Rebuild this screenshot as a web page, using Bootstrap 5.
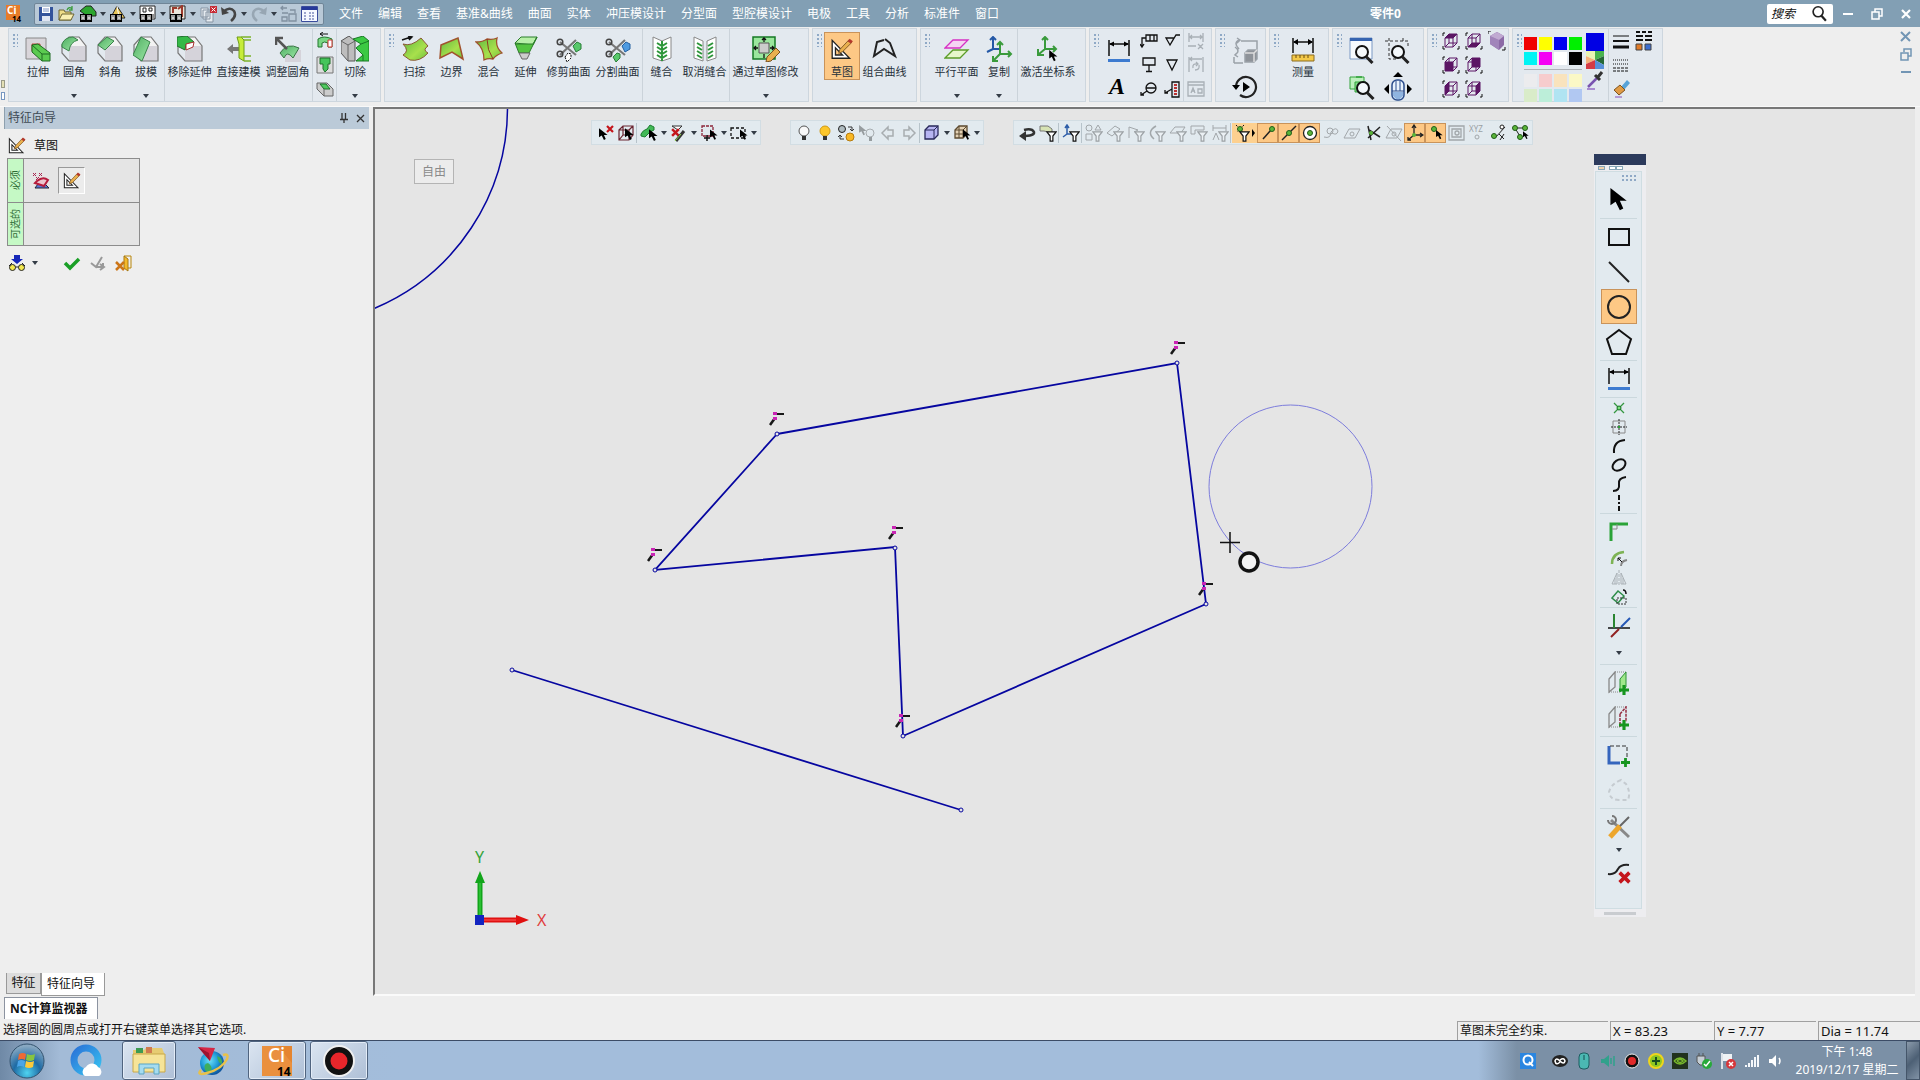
<!DOCTYPE html>
<html lang="zh-CN">
<head>
<meta charset="utf-8">
<meta name="viewport" content="width=device-width, initial-scale=1">
<title>零件0</title>
<link href="https://cdn.jsdelivr.net/npm/bootstrap@5.3.0/dist/css/bootstrap.min.css" rel="stylesheet">
<style>
body{font-family:"Noto Sans","Noto Sans CJK SC",sans-serif;font-size:12px;line-height:16px;background:#eee;color:#111}
button{background:none;border:0;padding:0;color:inherit;display:inline-flex;align-items:center;justify-content:center;flex:none}
svg{display:block;flex:none}
a{color:inherit;text-decoration:none}
.titlebar{background:#829fb4;height:27px;color:#fff}
.qat{background:#b9c9d7;border:1px solid #6f8597;height:22px;border-radius:2px;width:290px;margin-left:12px}
.qat button{width:21px;height:20px}
.car,.qat .car{width:9px}
.car::before,.drop::after{content:"";border:3px solid transparent;border-top:4px solid #343c46;border-bottom:0}
.menus{gap:15px;margin-left:15px}
.doc-name{width:32px;margin-right:365px}
.search-box{background:#fff;border-radius:2px;width:66px;height:20px}
.search-box input{border:0;background:none;width:40px;padding:0 0 0 4px;font-style:italic;font-size:12px;line-height:16px;color:#111}
.search-box input::placeholder{color:#111;opacity:1}
.win-buttons button{width:29px;height:24px}
.ribbon{height:80px;gap:3px;padding:1px 0 5px;border-bottom:1px solid #f8f8f8}
.gutter{width:5px;padding:52px 0 0 1px;gap:4px}
.gutter i{width:4px;height:8px;border:1px solid #9a9a86;background:#e4dfb4}
.gutter i+i{background:#fff;border-color:#7897c0}
.grp{background:#e3e9ef;border:1px solid #cdd6de;height:74px;padding-right:7px}
.grp-tight{padding-right:2px}
.grip{width:6px;height:14px;margin:4px 2px 0 3px;background:radial-gradient(circle,#8fa9c6 1px,transparent 1px) 0 0/4px 4px;flex:none}
.tool{flex-direction:column;justify-content:flex-start;font-size:11px;line-height:14px;padding-top:3px;margin-top:3px;width:36px;min-height:47px;color:#27313b;border:1px solid transparent;white-space:nowrap;align-self:flex-start}
.tool svg{margin-bottom:3px}
.drop::after{margin-top:15px}
.w-a{width:37px}.w-b{width:49px}.w-c{width:60px}.w-d{width:71px}
.on{background:#fdc885!important;border:1px solid #c9935a!important}
.vsep{width:1px;background:#cbd3da;align-self:stretch}
.stack3 button{width:23px;height:24px}
.stack2 button{width:36px;height:36px}
.swatches{display:grid;grid-template-columns:repeat(4,13px);gap:2px}
.swatches button{width:13px;height:13px}
.side{width:373px;padding:0 4px}
.side-head{background:#bbcad8;border-left:1px solid #8ea0ae;height:22px;color:#3f4a55;padding-left:3px}
.side-head button{width:17px}
.slots{width:133px;border:1px solid #8c8c8c;background:#e5e5e5;margin:4px 0 0 3px}
.slots>div{height:43px}
.slots>div+div{border-top:1px solid #8c8c8c;height:43px}
.slot-name{width:16px;background:#c5f9c5;border-left:1px solid #8c8c8c;color:#2d6b35;font-size:10px;line-height:15px;writing-mode:vertical-rl;text-orientation:sideways;transform:rotate(180deg);text-align:center}
.pressed{width:27px;height:27px;border:1px solid #999;border-right-color:#fff;border-bottom-color:#fff;background:#ececec}
.view{background:#e5e5e5;border:2px solid #777;border-right:0;border-bottom:2px solid #fafafa;margin-right:5px;overflow:hidden}
.scene{position:absolute;left:0;top:0;width:100%;height:100%}
.scene text{font:16px "Noto Sans",sans-serif}
.bars{position:absolute;left:216px;top:11px}
.bar{background:#e2eaef;border:1px solid #d2dde3;height:25px;padding:0 2px}
.bar button{width:21px;height:20px}
.bar .car{width:9px}
.bar .wide{width:25px}
.bar .vsep{height:20px;align-self:center;background:#b7c3ca;margin-right:1px}
.bar-next{margin-left:29px}
.dim{opacity:.33}
.mode{position:absolute;left:39px;top:50px;width:40px;height:25px;border:1px solid #b4b4b4;background:#ececec;color:#8a8a8a}
.palette{position:absolute;left:1219px;top:45px;width:52px;background:#ededf0}
.pal-head{height:11px;background:#2c3a5c}
.pal-tabs{height:6px;padding:1px 4px}
.pal-tabs i{width:7px;height:4px;border:1px solid #86a6b8;background:#fff}
.pal-body{background:#e2eaef;border:1px solid #cfdde2;width:47px;margin-left:1px;padding:0 4px}
.pal-body>div{border-bottom:1px solid #cbd8dd;display:flex;flex-direction:column;align-items:center;padding-bottom:1px}
.pal-body>div:last-child{border:0;height:99px}
.pal-body button{width:36px;height:35px}
.pal-body .sm{height:19px}
.pal-body .car{height:20px}
.pal-body .car-low{height:12px}
.pal-foot{width:32px;height:3px;background:#c9ccd0;margin:3px auto 2px 10px}
.tabs{padding-left:2px}
.tabs button{background:#dcdcdc;border:1px solid #999;border-top:0;height:21px;width:35px}
.tabs .cur-tab{background:#fff;width:64px;height:23px;justify-content:flex-start;padding-left:5px}
.nc{background:#fff;border:1px solid #8c93a0;border-bottom:0;font-weight:700;width:94px;height:22px;margin:1px 0 0 4px;justify-content:flex-start;padding-left:5px}
.status{height:21px;padding:1px 0 0 3px}
.cell{height:19px;border:1px solid #a0a0a0;border-right:0;border-bottom:0;width:102px;margin-left:2px;padding-left:2px;font-size:13px;line-height:18px}
.cell-l{width:151px;font-size:12px}
.taskbar{height:40px;border-top:1px solid #3c4c66;color:#fff;background:linear-gradient(90deg,#6f89a6 0,#a3bbd7 60px,#a3bbd7 122px,#a3bddb 400px,#a3bddb 77%,#7b90a6 79%,#7b90a6 100%)}
.task{width:54px;height:39px}
.task-m{width:58px}.task-l{width:64px}
.task.open{border:1px solid #50647f;border-radius:3px;background:linear-gradient(135deg,#dbe5f1,#aebfd6);box-shadow:inset 0 0 0 1px #e3ecf7}
.tray button{width:24px;height:24px}
.clock{font-size:12px;line-height:18px;width:118px;text-align:center}
.peek{width:14px;height:39px;border:1px solid #45566a;background:linear-gradient(135deg,#8a9aab,#4d6075 50%,#8193a6)}
</style>
</head>
<body class="d-flex flex-column vh-100 overflow-hidden">

<svg width="0" height="0" class="position-absolute">
<defs>
<linearGradient id="lg" x1="0" y1="0" x2="1" y2="1"><stop offset="0" stop-color="#4fae62"/><stop offset="1" stop-color="#9ee8a6"/></linearGradient>
<linearGradient id="lime" x1="0" y1="0" x2="1" y2="1"><stop offset="0" stop-color="#5fb83f"/><stop offset=".6" stop-color="#a8e04c"/><stop offset="1" stop-color="#6cc13c"/></linearGradient>
<linearGradient id="blu" x1="0" y1="0" x2="1" y2="1"><stop offset="0" stop-color="#2b74d8"/><stop offset="1" stop-color="#37c0f0"/></linearGradient>
<radialGradient id="orb" cx=".5" cy=".85" r=".8"><stop offset="0" stop-color="#4fd3f0"/><stop offset=".5" stop-color="#1e6ba5"/><stop offset="1" stop-color="#8aa9c2"/></radialGradient>
<radialGradient id="globe" cx=".4" cy=".4" r=".6"><stop offset="0" stop-color="#6fe0f5"/><stop offset=".6" stop-color="#1f9ad6"/><stop offset="1" stop-color="#0f57a0"/></radialGradient>
<symbol id="cur" viewBox="0 0 10 14"><path d="M0 0V10L3 8L5.500 13L7.500 12L5.500 7.500H9.500Z"/></symbol>
<symbol id="fun" viewBox="0 0 12 12"><path d="M1 1H11L7.500 5.500V11H4.500V5.500Z" fill="#fff" stroke="currentColor" stroke-width="1.300"/></symbol>
<symbol id="bino" viewBox="0 0 12 8"><path d="M0 0H12V8H0Z"/><path d="M2 1V6M4 1V6M8 1V6M10 1V6M2 4H4M8 4H10" stroke="#fff" stroke-width="1.200"/></symbol>
<symbol id="rx" viewBox="0 0 8 8"><path d="M1 1L7 7M7 1L1 7" stroke="#c4161c" stroke-width="2.200"/></symbol>
<symbol id="dimn" viewBox="0 0 24 24"><path d="M2 1V17M22 1V17M3 5H21" stroke="#111" stroke-width="1.500"/><path d="M2 5L7 2.500V7.500ZM22 5L17 2.500V7.500Z"/><path d="M1 21.500H23" stroke="#3d7bd0" stroke-width="3"/></symbol>
<symbol id="solid" viewBox="0 0 26 26"><path d="M1 9L9 1H18L25 9V25H9V15Z" fill="#f3f3f3"/><path d="M8 10H25V25H8Z" fill="#d5d3da"/><path d="M1 9L8 1H18L25 10V25H8L1 17Z" fill="none" stroke="#777" stroke-width="1.200"/></symbol>
<symbol id="sketch" viewBox="0 0 20 20"><path d="M1 2V18.500H17ZM4 9V15.500H10.500Z" fill="#fff" stroke="#222" fill-rule="evenodd" stroke-width="1.200"/><path d="M7 14L8 10.500L16 2L19 4L10.500 12.500Z" fill="#e9b04e" stroke="#7a5220" stroke-width=".8"/><path d="M15 3L17 .500L20 3L18 5Z" fill="#b5392b"/></symbol>
<symbol id="wire" viewBox="0 0 18 18"><path d="M3 6L7 2H15V11L11 15H3ZM3 6H11V15M11 6L15 2M7 2V11L3 15M7 11H15" fill="none" stroke="#5b1564"/><path d="M1 4V1H3M15 17H17V14M1 14V17H3" stroke="#111" fill="none"/></symbol>
<symbol id="mag" viewBox="0 0 20 20"><circle cx="8" cy="8" r="6" fill="#f4f8fb" stroke="#111" stroke-width="2"/><path d="M12 12.500L18.500 19" stroke="#222" stroke-width="3"/></symbol>
<symbol id="plus" viewBox="0 0 8 8"><path d="M4 0V8M0 4H8" stroke="#16951f" stroke-width="2.500"/></symbol>
<symbol id="mk" viewBox="0 0 16 16" overflow="visible"><path d="M1 12L6 5" stroke="#181818" stroke-width="2.500"/><path d="M6 1H15" stroke="#181818" stroke-width="2"/><path d="M4 -1H8V2H4ZM4 4H8V7H4Z" fill="#c925b4"/></symbol>
<symbol id="sc" viewBox="0 0 26 26"><path d="M4 6L20 19M4 19L20 4" stroke="#777" stroke-width="2.200"/><circle cx="4" cy="6" r="2.800" fill="none" stroke="#444" stroke-width="1.500"/><circle cx="4" cy="18" r="2.800" fill="none" stroke="#444" stroke-width="1.500"/></symbol>
</defs>
</svg>

<header class="titlebar d-flex align-items-center flex-none">
<svg class="ms-1" width="18" height="18" viewBox="0 0 18 18"><path d="M2 0H16V15H2Z" fill="#e77b28"/><text x="3" y="9" font-size="10" font-weight="700" fill="#fff">Ci</text><text x="8" y="17" font-size="8" font-weight="700">14</text></svg>
<div class="qat d-flex align-items-center">
<button aria-label="保存"><svg width="16" height="16" viewBox="0 0 16 16"><path d="M1 1H15V15H1Z" fill="#33539b"/><path d="M4 1H12V7H4Z" fill="#fff"/><path d="M4 10H12V15H4Z" fill="#dfe5f2"/><path d="M5 3H11M5 5H11" stroke="#7d93c4"/></svg></button>
<button aria-label="打开"><svg width="17" height="16" viewBox="0 0 17 16"><path d="M1 4H6L7 6H13V14H1Z" fill="#eedc87" stroke="#6d6433"/><path d="M1 14L4 8H16L13 14Z" fill="#f9efb2" stroke="#6d6433"/><path d="M9 4Q11 0 14 3M14 0V4H11" fill="none" stroke="#3d9c3e" stroke-width="1.300"/></svg></button>
<button aria-label="零件"><svg width="18" height="18" viewBox="0 0 18 18"><path d="M1 6L7 1H12L17 7V11H8Z" fill="#2ca62f" stroke="#222"/><use href="#bino" x="1" y="9" width="12" height="8"/></svg></button><button class="car" aria-label="更多"></button>
<button aria-label="装配"><svg width="18" height="18" viewBox="0 0 18 18"><path d="M2 12L8 1L16 13H8Z" fill="#e8c558" stroke="#222"/><path d="M8 1L10 12" stroke="#fff"/><use href="#bino" x="1" y="9" width="12" height="8"/></svg></button><button class="car" aria-label="更多"></button>
<button aria-label="工程图"><svg width="18" height="18" viewBox="0 0 18 18"><path d="M1 1H16V14H1Z" fill="#fff" stroke="#222"/><path d="M4 3H7V7H4ZM10 3H13V6H10ZM14 9V13" fill="none" stroke="#222"/><use href="#bino" x="1" y="9" width="12" height="8"/></svg></button><button class="car" aria-label="更多"></button>
<button aria-label="NC"><svg width="18" height="18" viewBox="0 0 18 18"><path d="M1 1H16V14H1Z" fill="#ece6db" stroke="#222"/><path d="M4 8V3H8M9 4L13 1V12" fill="none" stroke="#9d3a2c" stroke-width="2"/><use href="#bino" x="1" y="9" width="12" height="8"/></svg></button><button class="car" aria-label="更多"></button>
<button aria-label="关闭"><svg width="18" height="18" viewBox="0 0 18 18"><path d="M2 3H9V12H2ZM4 5H11V14H4ZM7 7H14V17H7Z" fill="#e6ebf0" stroke="#8593a2"/><path d="M11 1H18V8H11Z" fill="#c72c36"/><path d="M12.500 2.500L16.500 6.500M16.500 2.500L12.500 6.500" stroke="#fff"/></svg></button>
<button aria-label="撤销"><svg width="18" height="18" viewBox="0 0 18 18"><path d="M3 7Q10 1 14 6Q17 11 11 16" fill="none" stroke="#444" stroke-width="2.500"/><path d="M1 2L2 10L9 8Z" fill="#444"/></svg></button><button class="car" aria-label="更多"></button>
<button aria-label="重做"><svg width="18" height="18" viewBox="0 0 18 18"><path d="M15 7Q8 1 4 6Q1 11 7 16" fill="none" stroke="#97a6b3" stroke-width="2.500"/><path d="M17 2L16 10L9 8Z" fill="#97a6b3"/></svg></button><button class="car" aria-label="更多"></button>
<button aria-label="替换"><svg width="18" height="18" viewBox="0 0 18 18" fill="none" stroke="#8090a0" stroke-width="1.300"><path d="M1 3H7M3 1L1 3L3 5M10 5H15V8M2 8H8M2 12H7V16H2ZM9 9H16V16H9Z"/></svg></button>
<button aria-label="列表"><svg width="17" height="16" viewBox="0 0 17 16"><path d="M.500 .500H16.500V15.500H.500Z" fill="#f5f8ff" stroke="#3a4c9c"/><path d="M1 1H16V4H1Z" fill="#26399a"/><path d="M3 7H6M8 7H14M3 10H6M8 10H14M3 13H6M8 13H14" stroke="#44549c" stroke-dasharray="2 1"/></svg></button>
</div>
<nav class="menus d-flex flex-fill"><a href="#">文件</a><a href="#">编辑</a><a href="#">查看</a><a href="#">基准&amp;曲线</a><a href="#">曲面</a><a href="#">实体</a><a href="#">冲压模设计</a><a href="#">分型面</a><a href="#">型腔模设计</a><a href="#">电极</a><a href="#">工具</a><a href="#">分析</a><a href="#">标准件</a><a href="#">窗口</a></nav>
<strong class="doc-name">零件0</strong>
<div class="search-box d-flex align-items-center"><input type="text" placeholder="搜索" aria-label="搜索"><svg width="20" height="18" viewBox="0 0 18 16"><circle cx="10" cy="6" r="4.500" fill="none" stroke="#222" stroke-width="1.500"/><path d="M13 9.500L17 14" stroke="#222" stroke-width="2"/></svg></div>
<div class="win-buttons d-flex">
<button aria-label="最小化"><svg width="12" height="12"><path d="M1 6H11" stroke="#fff" stroke-width="2"/></svg></button>
<button aria-label="还原"><svg width="12" height="12"><path d="M4 4V1H11V8H8M1 4H8V11H1Z" fill="none" stroke="#fff" stroke-width="1.500"/></svg></button>
<button aria-label="退出"><svg width="12" height="12"><path d="M2 2L10 10M10 2L2 10" stroke="#fff" stroke-width="2.200"/></svg></button>
</div>
</header>

<section class="ribbon d-flex" aria-label="功能区">
<div class="gutter d-flex flex-column"><i></i><i></i></div>
<div class="grp d-flex"><span class="grip"></span>
<button class="tool"><svg width="26" height="26" viewBox="0 0 26 26"><path d="M1 2H21V23H1Z" fill="#d9d5da" stroke="#888"/><path d="M7 8H15V15H7Z" fill="#d7837a" stroke="#c5453b"/><path d="M7 9L13 8L25 17V25H17L7 16Z" fill="#5bcb50" stroke="#1f6b22"/><path d="M17 18H25M17 18V25M7 9L17 18" stroke="#1f6b22" fill="none"/></svg>拉伸</button>
<button class="tool drop"><svg width="26" height="26" viewBox="0 0 26 26"><use href="#solid"/><path d="M1 8Q4 1 12 1L17 4Q9 6 8 15L1 11Z" fill="url(#lg)" stroke="#39844a"/></svg>圆角</button>
<button class="tool"><svg width="26" height="26" viewBox="0 0 26 26"><use href="#solid"/><path d="M1 9L10 1L17 5L8 14Z" fill="url(#lg)" stroke="#39844a"/></svg>斜角</button>
<button class="tool drop"><svg width="26" height="26" viewBox="0 0 26 26"><use href="#solid"/><path d="M8 1L17 6L9 25L0 19Z" fill="url(#lg)" stroke="#39844a"/></svg>拔模</button>
<span class="vsep"></span>
<button class="tool w-b"><svg width="26" height="26" viewBox="0 0 26 26"><use href="#solid"/><path d="M0 1L10 0L17 6L9 8L8 14L0 10Z" fill="#35b947" stroke="#1e702b"/><path d="M9 8L17 6L16 11L9 14Z" fill="#fff" stroke="#a33"/></svg>移除延伸</button>
<button class="tool w-b"><svg width="26" height="26" viewBox="0 0 26 26"><path d="M1 13L7 8V11H13V15H7V18Z" fill="#777"/><path d="M11 1H15L18 4V25L13 22V8Z" fill="#c6ec3a" stroke="#6f9d17"/><path d="M15 1H25M18 4H25M18 20H25M18 25H25" stroke="#7cb22a" stroke-width="1.500"/></svg>直接建模</button>
<button class="tool w-b"><svg width="26" height="26" viewBox="0 0 26 26"><path d="M10 14H26V26H10Z" fill="#d5d3da"/><path d="M5 17Q12 6 24 12L18 22Q12 14 9 22Z" fill="url(#lg)" stroke="#3a7445"/><path d="M2 3L12 13M1 9V2H8" fill="none" stroke="#555" stroke-width="2.500"/></svg>调整圆角</button>
<span class="vsep"></span>
<div class="stack3 d-flex flex-column">
<button aria-label="扫描切除"><svg width="18" height="18" viewBox="0 0 18 18"><path d="M2 7Q8 3 16 7V15H12V11Q8 9 6 11V15H2Z" fill="#79d683" stroke="#23762f"/><path d="M12 8H16V15H12Z" fill="#fff" stroke="#c33"/><path d="M4 2H12M4 2L7 0M4 2L7 4" stroke="#111"/></svg></button>
<button aria-label="孔"><svg width="18" height="18" viewBox="0 0 18 18"><path d="M1 1H17V17H1Z" fill="#ddd" stroke="#777"/><path d="M4 2H14V8H12V13L9 16L7 13V8H4Z" fill="#45c55a" stroke="#1e702b"/></svg></button>
<button aria-label="型腔"><svg width="18" height="18" viewBox="0 0 18 18"><path d="M1 3H11L17 9V16H8L1 9Z" fill="#ccc" stroke="#666"/><path d="M4 4H10L14 9H8Z" fill="#50c95e" stroke="#1e702b"/><path d="M8 9V16" stroke="#666"/></svg></button>
</div>
<span class="vsep"></span>
<button class="tool drop"><svg width="28" height="26" viewBox="0 0 28 26"><path d="M0 5L8 0L14 5V25H7L0 17Z" fill="#bdbdbd" stroke="#555"/><path d="M0 5L7 9V25M7 9L14 5" fill="none" stroke="#666"/><path d="M12 3L22 0L28 5V25H15L22 19L15 12L20 8Z" fill="#3bc943" stroke="#187a25"/><path d="M20 8L28 5M22 19V25" stroke="#187a25"/></svg>切除</button>
</div>

<div class="grp d-flex"><span class="grip"></span>
<button class="tool w-a"><svg width="28" height="26" viewBox="0 0 28 26"><path d="M2 8Q10 11 20 2L27 10Q21 14 27 17Q19 26 9 24L2 19Q9 15 2 8Z" fill="url(#lime)" stroke="#8c5a35"/><path d="M1 4L10 1M7 0L11 1L8 4" stroke="#111" fill="none" stroke-width="1.500"/></svg>扫掠</button>
<button class="tool w-a"><svg width="26" height="26" viewBox="0 0 26 26"><path d="M2 9L19 2L24 23L13 16L1 22Z" fill="url(#lime)" stroke="#a0522d" stroke-width="1.500"/></svg>边界</button>
<button class="tool w-a"><svg width="28" height="26" viewBox="0 0 28 26"><path d="M1 6Q8 6 12 3Q18 4 22 2Q20 11 27 17Q21 19 18 23Q13 22 9 24Q9 12 1 6Z" fill="url(#lime)" stroke="#a0522d" stroke-width="1.300"/><path d="M12 3Q12 14 18 23" stroke="#8c3b1f" fill="none"/></svg>混合</button>
<button class="tool w-a"><svg width="26" height="26" viewBox="0 0 26 26"><path d="M2 7L8 1H24L20 9Z" fill="#b8f0a8" stroke="#2b7d2a"/><path d="M2 7L6 17H16L24 1L20 8H3Z" fill="#54c540" stroke="#2b7d2a"/><path d="M6 17L9 23H14L17 17Z" fill="#ccc" stroke="#666"/></svg>延伸</button>
<button class="tool w-b"><svg width="26" height="26" viewBox="0 0 26 26"><use href="#sc"/><path d="M17 10L21 6L25 8V13L20 16Z" fill="#58c86a" stroke="#2a7e39"/><path d="M9 21L12 17L15 18V22L11 26Z" fill="#fff" stroke="#111" stroke-dasharray="2 1"/></svg>修剪曲面</button>
<button class="tool w-b"><svg width="26" height="26" viewBox="0 0 26 26"><use href="#sc"/><path d="M17 10L21 6L25 8V13L20 16Z" fill="#4e9ae0" stroke="#2560a0"/><path d="M8 21L12 17L15 18V22L11 26Z" fill="#58c86a" stroke="#2a7e39"/></svg>分割曲面</button>
<span class="vsep"></span>
<button class="tool w-a"><svg width="20" height="26" viewBox="0 0 20 26"><path d="M1 1L10 5L19 1V22L10 25L1 22Z" fill="#fff" stroke="#888"/><path d="M5 7L10 10L15 7M5 11L10 14L15 11M5 15L10 18L15 15M5 19L10 22L15 19M10 5V25" stroke="#2d963a" fill="none" stroke-width="2"/></svg>缝合</button>
<button class="tool w-b"><svg width="24" height="26" viewBox="0 0 24 26"><path d="M1 1L10 5V25L1 22ZM23 1L14 5V25L23 22Z" fill="#fff" stroke="#888"/><path d="M4 7L9 10M4 11L9 14M4 15L9 18M4 19L9 22M20 7L15 10M20 11L15 14M20 15L15 18M20 19L15 22" stroke="#2d963a" stroke-width="2"/></svg>取消缝合</button>
<span class="vsep"></span>
<button class="tool w-d drop"><svg width="28" height="26" viewBox="0 0 28 26"><path d="M1 1H23V23H1Z" fill="#9be79d" stroke="#167a25" stroke-width="1.500"/><path d="M7 7H17V17H7Z" fill="#ccc" stroke="#555"/><path d="M12 2V6M10 4L12 2L14 4M12 18V22M2 12H6M4 10L2 12L4 14M18 12H22M20 10L22 12L20 14" stroke="#111" fill="none" stroke-width="1.300"/><path d="M14 26L15 21L24 12L28 16L19 25Z" fill="#e9b04e" stroke="#7a5220"/></svg>通过草图修改</button>
</div>

<div class="grp d-flex"><span class="grip"></span>
<button class="tool on"><svg width="24" height="26" viewBox="-1 -1 22 22"><use href="#sketch" width="20" height="20"/></svg>草图</button>
<button class="tool w-b"><svg width="26" height="26" viewBox="0 0 26 26"><path d="M12 4L5 6L2 20L12 13L23 20L18 7L13 3" fill="none" stroke="#222" stroke-width="2"/></svg>组合曲线</button>
</div>

<div class="grp d-flex"><span class="grip"></span>
<button class="tool w-b drop"><svg width="26" height="26" viewBox="0 0 26 26"><path d="M1 12L9 4H24L16 12Z" fill="#f5d4f2" stroke="#d630c4" stroke-width="1.300"/><path d="M1 22L9 14H24L16 22Z" fill="#e6f7cb" stroke="#5b9d29" stroke-width="1.300"/></svg>平行平面</button>
<button class="tool drop"><svg width="28" height="26" viewBox="0 0 28 26"><path d="M8 13V2M5 4L8 1L11 4M8 13H16M8 13L2 16" stroke="#2458a6" fill="none" stroke-width="2"/><path d="M15 18V7M12 9L15 6L18 9M15 18H26M23 15L26 18L23 21M15 18L9 24M8 20V25H13" stroke="#3a9b3c" fill="none" stroke-width="2"/></svg>复制</button>
<span class="vsep"></span>
<button class="tool w-c"><svg width="26" height="26" viewBox="0 0 26 26"><path d="M10 13V2M7 4L10 1L13 4M10 13H21M18 10L21 13L18 16M10 13L4 18M3 13V19H9" stroke="#3a9b3c" fill="none" stroke-width="2"/><use href="#cur" x="14" y="14" width="9" height="12"/></svg>激活坐标系</button>
</div>

<div class="grp pe-1 d-flex"><span class="grip"></span>
<div class="stack2 d-flex flex-column pt-1">
<button aria-label="尺寸"><svg width="24" height="24"><use href="#dimn"/></svg></button>
<button aria-label="文字"><svg width="30" height="30"><text x="5" y="22" font-family="Liberation Serif" font-size="24" font-weight="700" font-style="italic">A</text></svg></button></div>
<div class="stack3 d-flex flex-column">
<button aria-label="形位公差"><svg width="18" height="18" fill="none" stroke="#111" stroke-width="1.300"><path d="M2 14V6H6M6 3H17V9H6ZM10 3V9M14 3V9M0 12L2 15L4 12"/></svg></button>
<button aria-label="基准"><svg width="18" height="18" fill="none" stroke="#111" stroke-width="1.300"><path d="M3 2H15V9H3ZM9 9V15M6 15.500H12"/></svg></button>
<button aria-label="序号"><svg width="18" height="18" fill="none" stroke="#111" stroke-width="1.300"><circle cx="11" cy="8" r="5"/><path d="M6 8H16M7 11L1 15M1 12V15H4"/></svg></button></div>
<div class="stack3 d-flex flex-column">
<button aria-label="粗糙度"><svg width="18" height="18" fill="none" stroke="#111" stroke-width="1.300"><path d="M3 6H11L7 13ZM7 13L13 3H17"/></svg></button>
<button aria-label="焊接"><svg width="18" height="18" fill="none" stroke="#111" stroke-width="1.300"><path d="M4 4H14L9 14Z"/></svg></button>
<button aria-label="孔标注"><svg width="18" height="18" fill="none" stroke="#111" stroke-width="1.300"><path d="M9 2H16V17H9ZM9 9L2 13M2 10V13H5"/><path d="M12.500 4V15" stroke="#b33" stroke-dasharray="2 1" stroke-width="3"/></svg></button></div>
<span class="vsep"></span>
<div class="stack3 d-flex flex-column">
<button aria-label="删除尺寸"><svg width="18" height="18" fill="none" stroke="#a9b0b6" stroke-width="1.300"><path d="M2 1V10M16 1V10M3 5H15M5 3L3 5L5 7M13 3L15 5L13 7M1 14H9M11 12L16 17M16 12L11 17"/></svg></button>
<button aria-label="更新尺寸"><svg width="18" height="18" fill="none" stroke="#a9b0b6" stroke-width="1.300"><path d="M2 1V16M16 1V16M3 3H15M5 1L3 3L5 5M6 12Q5 7 11 8M9 6L11 8L9 10M12 9Q13 14 8 14"/></svg></button>
<button aria-label="属性"><svg width="18" height="18" fill="none" stroke="#a9b0b6" stroke-width="1.300"><path d="M1 2H17V16H1ZM1 5H17M4 13L6 8L8 13M5 11H8M11 9H15V13H11Z"/></svg></button></div>
</div>

<div class="grp grp-tight d-flex"><span class="grip"></span>
<div class="stack2 d-flex flex-column pt-1">
<button aria-label="重新定向"><svg width="26" height="28" viewBox="0 0 26 28" fill="none" stroke="#9aa1a8" stroke-width="1.500"><path d="M2 26V20M2 26H11M9 4H25V12M7 12Q1 6 7 3M5 1L8 3L5 6M3 10Q9 14 3 18M6 15L3 18L6 20"/><path d="M13 16L16 13H25V22L22 25H13Z" fill="#8e9399"/><path d="M13 16H22V25M22 16L25 13" stroke="#ddd"/></svg></button>
<button aria-label="更新"><svg width="26" height="26" viewBox="0 0 26 26"><path d="M4 13A10 10 0 1 1 8 21" fill="none" stroke="#222" stroke-width="2.200"/><path d="M0 11H8L4 16ZM11 8L18 13L11 18Z"/></svg></button></div>
</div>

<div class="grp d-flex"><span class="grip"></span>
<button class="tool ms-1"><svg width="24" height="26" viewBox="0 0 24 26"><path d="M2 2V17M22 2V17M3 6H21" stroke="#111" stroke-width="1.500"/><path d="M2 6L7 3V9ZM22 6L17 3V9Z"/><path d="M1 19H23V25H1Z" fill="#f4c949" stroke="#8c6c1e"/><path d="M5 19V22M9 19V22M13 19V22M17 19V22" stroke="#6a4c10"/></svg>测量</button>
</div>

<div class="grp d-flex"><span class="grip"></span>
<div class="stack2 d-flex flex-column pt-1">
<button aria-label="缩放全部"><svg width="28" height="28" viewBox="0 0 28 28"><path d="M2 1H24V22H2Z" fill="#f6fafe" stroke="#7a99c4"/><path d="M2 1H24V4H2Z" fill="#3664b0"/><use href="#mag" x="6" y="7" width="20" height="20"/></svg></button>
<button aria-label="缩放选择"><svg width="28" height="28" viewBox="0 0 28 28"><path d="M2 4H16V16H2ZM8 4H14Z" fill="#bdf0bd" stroke="#32a33a"/><path d="M7 9H18V19H7Z" fill="#84dd8b" stroke="#32a33a"/><use href="#mag" x="7" y="7" width="20" height="20"/></svg></button></div>
<div class="stack2 d-flex flex-column pt-1">
<button aria-label="窗口缩放"><svg width="28" height="28" viewBox="0 0 28 28"><path d="M5 1V22H12M1 4H24V10M19 1V6" fill="none" stroke="#333" stroke-dasharray="3 2"/><use href="#mag" x="6" y="7" width="20" height="20"/></svg></button>
<button aria-label="平移"><svg width="30" height="30" viewBox="0 0 30 30"><path d="M15 0L20 5H10ZM1 17L6 12V22ZM29 17L24 12V22Z"/><rect x="9" y="8" width="12" height="20" rx="5" fill="#e9f3fd" stroke="#2b4d8c" stroke-width="1.500"/><path d="M9 19H21M13 9V19M17 9V19" stroke="#2b4d8c"/><path d="M10 20H20V24L17 27H13L10 24Z" fill="#8fb4e0"/></svg></button></div>
</div>

<div class="grp pe-0 d-flex"><span class="grip"></span>
<div class="stack3 d-flex flex-column">
<button aria-label="俯视"><svg width="18" height="18"><use href="#wire"/><path d="M3 6L7 2H15L11 6Z" fill="#5b1564"/></svg></button>
<button aria-label="前视"><svg width="18" height="18"><use href="#wire"/><path d="M3 6H11V15H3Z" fill="#5b1564"/></svg></button>
<button aria-label="左视"><svg width="18" height="18"><use href="#wire"/><path d="M3 6L7 2V11L3 15Z" fill="#5b1564"/></svg></button></div>
<div class="stack3 d-flex flex-column">
<button aria-label="仰视"><svg width="18" height="18"><use href="#wire"/><path d="M3 15L7 11H15L11 15Z" fill="#5b1564"/></svg></button>
<button aria-label="后视"><svg width="18" height="18"><use href="#wire"/><path d="M7 2H15V11H7Z" fill="#5b1564"/></svg></button>
<button aria-label="右视"><svg width="18" height="18"><use href="#wire"/><path d="M11 6L15 2V11L11 15Z" fill="#5b1564"/></svg></button></div>
<div class="stack3 d-flex flex-column">
<button aria-label="等轴测"><svg width="18" height="20" viewBox="0 0 18 20"><path d="M2 5L9 1L16 5V14L11 19L2 13Z" fill="#8c6aa6"/><path d="M2 5L11 9V19L2 13Z" fill="#a184ba"/><path d="M2 5L9 1L16 5L11 9Z" fill="#c1aad2"/><path d="M0 3V0H3M14 19H17V16" fill="none" stroke="#111"/></svg></button></div>
</div>

<div class="grp d-flex"><span class="grip"></span>
<div class="d-flex flex-column pt-1">
<div class="swatches pt-1">
<button style="background:#f00000" aria-label="红"></button><button style="background:#ffff00" aria-label="黄"></button><button style="background:#0000f0" aria-label="蓝"></button><button style="background:#00f000" aria-label="绿"></button>
<button style="background:#00f4f4" aria-label="青"></button><button style="background:#f400f4" aria-label="品红"></button><button style="background:#ffffff" aria-label="白"></button><button style="background:#000000" aria-label="黑"></button></div>
<hr class="my-1">
<div class="swatches">
<button style="background:#ececee" aria-label="浅灰"></button><button style="background:#f7cccd" aria-label="浅红"></button><button style="background:#f9e3bd" aria-label="浅橙"></button><button style="background:#fbf8c6" aria-label="浅黄"></button>
<button style="background:#d9ecc9" aria-label="浅绿"></button><button style="background:#bceed9" aria-label="薄荷"></button><button style="background:#b0e4f2" aria-label="浅青"></button><button style="background:#b1c8f2" aria-label="浅蓝"></button></div>
</div>
<div class="d-flex flex-column ps-1 pt-1">
<button aria-label="当前颜色"><svg width="18" height="18"><path d="M0 0H18V18H0Z" fill="#0000e4"/></svg></button>
<button aria-label="调色板"><svg width="18" height="18"><path d="M0 0H18V18H0Z" fill="#fff"/><path d="M9 9L0 5V0H9Z" fill="#e9f4b4"/><path d="M9 9V0H18V5Z" fill="#49b34f"/><path d="M9 9L18 5V14Z" fill="#246836"/><path d="M9 9L0 5V13Z" fill="#f5b27a"/><path d="M9 9L0 13V18H9Z" fill="#d43b45"/><path d="M9 9V18H18V14Z" fill="#5790d8"/></svg></button>
<button aria-label="吸管"><svg width="18" height="22" viewBox="0 0 18 22"><path d="M2 18L11 9" stroke="#7a54b0" stroke-width="2.500"/><path d="M9 6L14 11M12 8L16 3" stroke="#333" stroke-width="3"/><path d="M1 20H9" stroke="#a98bd0" stroke-width="2"/></svg></button></div>
<span class="vsep ms-1"></span>
<div class="stack3 d-flex flex-column">
<button aria-label="线宽"><svg width="18" height="18"><path d="M1 4H17" stroke="#111"/><path d="M1 9H17" stroke="#111" stroke-width="2"/><path d="M1 15H17" stroke="#111" stroke-width="3"/></svg></button>
<button aria-label="线型"><svg width="18" height="18" stroke="#111"><path d="M1 4H17M1 8H17" stroke-dasharray="1 1"/><path d="M1 12H17M1 15H17" stroke-dasharray="3 1"/></svg></button>
<button aria-label="格式刷"><svg width="18" height="20" viewBox="0 0 18 20"><path d="M9 8L15 1L18 4L12 11Z" fill="#58a3d8"/><path d="M2 11L8 6L13 11L7 16Z" fill="#e09b45" stroke="#80531d"/><path d="M3 17H10V19H3Z" fill="#b39ad4"/></svg></button></div>
<div class="stack3 d-flex flex-column">
<button aria-label="样式"><svg width="18" height="20" viewBox="0 0 18 20"><path d="M1 1H17" stroke="#111" stroke-width="2" stroke-dasharray="4 2"/><path d="M1 5H17M1 9H17" stroke="#111" stroke-width="2" stroke-dasharray="7 2"/><path d="M1 13H7V19H1Z" fill="#e07b28" stroke="#444"/><path d="M10 13H16V19H10Z" fill="#3d6fd0" stroke="#444"/></svg></button></div>
</div>
<div class="ms-auto d-flex flex-column pe-2">
<button aria-label="关闭文档"><svg width="12" height="18"><path d="M1 4L10 13M10 4L1 13" stroke="#7295b4" stroke-width="2"/></svg></button>
<button aria-label="还原文档"><svg width="12" height="18"><path d="M4 6V3H11V10H8M1 7H8V14H1Z" fill="none" stroke="#7295b4" stroke-width="1.500"/></svg></button>
<button aria-label="最小化文档"><svg width="12" height="18"><path d="M1 8H11" stroke="#7295b4" stroke-width="2"/></svg></button>
</div>
</section>

<main class="d-flex flex-fill" style="min-height:0">
<aside class="side d-flex flex-column flex-shrink-0">
<div class="side-head d-flex align-items-center"><span class="flex-fill">特征向导</span><button aria-label="固定"><svg width="10" height="12"><path d="M3 1V7M6.500 1V7M1 7.500H9M5 7V11" stroke="#333" stroke-width="1.300"/></svg></button><button aria-label="关闭面板"><svg width="9" height="9"><path d="M1 1L8 8M8 1L1 8" stroke="#333" stroke-width="1.300"/></svg></button></div>
<div class="d-flex align-items-center pt-2 ps-1"><svg width="18" height="17"><use href="#sketch"/></svg><span class="ps-2">草图</span></div>
<div class="slots">
<div class="d-flex"><span class="slot-name">必须</span><button class="px-2" aria-label="基准"><svg width="18" height="18" viewBox="0 0 18 18"><path d="M1 1L4 4M4 1L1 4M7 1L10 4M10 1L7 4M4 5L7 8M7 5L4 8" stroke="#a82350"/><path d="M3 16H17L13 12H6Z" fill="#5a78d6" stroke="#223"/><path d="M5 9Q11 4 16 8L12 14L3 11Z" fill="#ecc5cd" stroke="#b51c3c" stroke-width="2"/></svg></button><button class="pressed align-self-center" aria-label="草图平面"><svg width="18" height="17"><use href="#sketch"/></svg></button></div>
<div class="d-flex"><span class="slot-name">可选的</span></div>
</div>
<div class="d-flex align-items-center mt-2 ps-1 gap-1">
<button aria-label="预览"><svg width="18" height="18" viewBox="0 0 18 18"><path d="M6 1H12V5H15L9 10L3 5H6Z" fill="#1526b8"/><circle cx="4.500" cy="13.500" r="3" fill="#f3e84e" stroke="#222"/><circle cx="13.500" cy="13.500" r="3" fill="#f3e84e" stroke="#222"/><path d="M7.500 13H10.500M1 12L4 9M17 12L14 9" stroke="#222"/></svg></button><button class="car me-3" aria-label="更多"></button>
<button class="ms-1" aria-label="确定"><svg width="18" height="18"><path d="M2 9L7 14L16 5" fill="none" stroke="#1a9f26" stroke-width="3.500"/></svg></button>
<button class="ms-1" aria-label="应用"><svg width="18" height="18"><path d="M2 9L7 13L13 3M7 13H14V9M11 16L15 13L11 10" fill="none" stroke="#999" stroke-width="2"/></svg></button>
<button class="ms-1" aria-label="退出"><svg width="18" height="18"><path d="M9 2H16V14H12" fill="none" stroke="#b8860b"/><path d="M9 2L13 5V17L9 14Z" fill="#f4b92c" stroke="#a67812"/><path d="M1 8L9 16M9 8L1 16" stroke="#cc7518" stroke-width="2.500"/></svg></button>
</div>
<div class="tabs d-flex mt-auto"><button>特征</button><button class="cur-tab">特征向导</button></div>
</aside>

<div class="view flex-fill position-relative">
<svg class="scene" aria-label="草图画布">
<g transform="translate(-375 -109)" fill="none" stroke="#0606a0" stroke-width="1.800">
<path d="M507.500 106A218 218 0 0 1 373 309" stroke-width="1.500"/>
<path d="M777 434L1177 363L1206 604L903 736L895 547L655 570Z"/>
<path d="M512 670L961 810"/>
<circle cx="1290.500" cy="486.500" r="81.500" stroke="#7d7ddc" stroke-width="1"/>
<g fill="#e5e5e5" stroke-width="1"><circle cx="777" cy="434" r="2"/><circle cx="1177" cy="363" r="2"/><circle cx="1206" cy="604" r="2"/><circle cx="903" cy="736" r="2"/><circle cx="895" cy="548" r="2"/><circle cx="655" cy="570" r="2"/><circle cx="512" cy="670" r="2"/><circle cx="961" cy="810" r="2"/></g>
<g stroke="none"><use href="#mk" x="769" y="413" width="16" height="16"/><use href="#mk" x="1170" y="342" width="16" height="16"/><use href="#mk" x="1198" y="583" width="16" height="16"/><use href="#mk" x="895" y="715" width="16" height="16"/><use href="#mk" x="888" y="527" width="16" height="16"/><use href="#mk" x="647" y="549" width="16" height="16"/></g>
<path d="M1230 532V553M1220 542.500H1240" stroke="#111" stroke-width="1.500"/>
<circle cx="1249" cy="562" r="9" stroke="#111" stroke-width="3.500" fill="#f2f2f2"/>
<path d="M480 918V882" stroke="#12a51b" stroke-width="5"/><path d="M480 918V882" stroke="#42d94b" stroke-width="1"/><path d="M480 871L485 883H475Z" fill="#12a51b" stroke="none"/>
<path d="M482 920H520" stroke="#e01010" stroke-width="5"/><path d="M482 920H518" stroke="#ff5a5a" stroke-width="1"/><path d="M529 920L516 925V915Z" fill="#e01010" stroke="none"/>
<path d="M475 915H484V925H475Z" fill="#1224c0" stroke="none"/>
<text x="475" y="863" fill="#33a33a" stroke="none">Y</text><text x="537" y="926" fill="#e03c3c" stroke="none">X</text>
</g></svg>

<button class="mode">自由</button>

<div class="bars d-flex">
<div class="bar d-flex align-items-center">
<button aria-label="清除选择"><svg width="18" height="18"><use href="#cur" x="3" y="4" width="9" height="13"/><use href="#rx" x="10" y="1" width="8" height="8"/></svg></button>
<button aria-label="选择实体"><svg width="18" height="18"><path d="M2 6L6 2H16V11L12 16H2ZM2 6H12V16M12 6L16 2M6 2V11L2 16M6 11H16" fill="none" stroke="#6b2430" stroke-width="1.200"/><use href="#cur" x="8" y="4" width="9" height="13"/></svg></button><span class="vsep"></span>
<button aria-label="选择面"><svg width="18" height="18"><path d="M1 10Q3 6 7 5L10 1L14 3V6L10 8L5 13L1 12Z" fill="#41b957" stroke="#1e7d31"/><use href="#cur" x="9" y="5" width="9" height="13"/></svg></button><button class="car" aria-label="更多"></button>
<button aria-label="过滤"><svg width="18" height="18"><path d="M2 2H12L8 6Z" fill="#fff" stroke="#333"/><use href="#rx" x="1" y="4" width="9" height="9"/><path d="M6 17L14 7" stroke="#333" stroke-width="3"/><path d="M5 17L11 10" stroke="#8ccf4b"/></svg></button><button class="car" aria-label="更多"></button>
<button aria-label="添加框选"><svg width="18" height="18"><path d="M2 2H13V12H2Z" fill="none" stroke="#8c2438" stroke-width="1.300" stroke-dasharray="3 1"/><path d="M4 14H10M7 11V17" stroke="#111" stroke-width="1.500"/><use href="#cur" x="10" y="5" width="8" height="12"/></svg></button><button class="car" aria-label="更多"></button>
<button aria-label="框选"><svg width="18" height="18"><path d="M1 4H15V14H1Z" fill="none" stroke="#111" stroke-width="1.300" stroke-dasharray="3 2"/><use href="#cur" x="10" y="5" width="8" height="12"/></svg></button><button class="car" aria-label="更多"></button>
</div>
<div class="bar bar-next d-flex align-items-center">
<button aria-label="隐藏"><svg width="18" height="18"><circle cx="9" cy="7" r="5" fill="#f8f8f8" stroke="#555"/><path d="M7 12H11V16H7Z" fill="#333"/></svg></button>
<button aria-label="显示"><svg width="18" height="18"><circle cx="9" cy="7" r="5" fill="#fcc62a" stroke="#d09a16"/><path d="M7 12H11V16H7Z" fill="#333"/></svg></button>
<button aria-label="切换显示"><svg width="18" height="18"><circle cx="5" cy="5" r="3.500" fill="#aebbc0" stroke="#222"/><circle cx="13" cy="13" r="4" fill="#f9b825" stroke="#b57c12"/><path d="M11 3H15V7M13 5L15 7L17 5M7 15H3V11M1 13L3 11L5 13" fill="none" stroke="#333"/></svg></button>
<button class="dim" aria-label="选择隐藏"><svg width="18" height="18"><use href="#cur" x="1" y="1" width="8" height="11"/><circle cx="12" cy="9" r="4" fill="none" stroke="#333"/><path d="M11 13H14V17H11Z"/></svg></button>
<button class="dim" aria-label="后退"><svg width="18" height="18"><path d="M3 9L9 3V6H14V12H9V15Z" fill="none" stroke="#333" stroke-width="1.500"/></svg></button>
<button class="dim" aria-label="前进"><svg width="18" height="18"><path d="M15 9L9 3V6H4V12H9V15Z" fill="none" stroke="#333" stroke-width="1.500"/></svg></button><span class="vsep"></span>
<button aria-label="着色"><svg width="18" height="18"><path d="M2 6L6 2H15V11L11 15H2Z" fill="#b7b5f2" stroke="#29285a" stroke-width="1.300"/><path d="M2 6H11V15M11 6L15 2" fill="none" stroke="#29285a"/></svg></button><button class="car" aria-label="更多"></button>
<button aria-label="线框"><svg width="18" height="18"><path d="M2 6L6 2H14V10L10 14H2Z" fill="#e3d1b4" stroke="#5c4a30" stroke-width="1.300"/><path d="M2 6H10V14M10 6L14 2M6 2V14M2 10H14" fill="none" stroke="#5c4a30"/><use href="#cur" x="10" y="5" width="8" height="12"/></svg></button><button class="car" aria-label="更多"></button>
</div>
<div class="bar bar-next d-flex align-items-center">
<button aria-label="返回"><svg width="18" height="18"><path d="M4 12Q17 12 16 8Q14 4 6 6" fill="none" stroke="#333" stroke-width="2.500"/><path d="M1 12L8 7V17Z" fill="#333"/></svg></button>
<button aria-label="面过滤"><svg width="18" height="18"><path d="M1 2H9L13 5V9L5 7H1Z" fill="#d7e3b4" stroke="#777"/><use href="#fun" x="7" y="7" width="11" height="11"/></svg></button><span class="vsep"></span>
<button aria-label="坐标过滤"><svg width="18" height="18"><path d="M5 10V2M3 4L5 1L7 4M5 10H10M5 10L1 13" stroke="#2d5da8" fill="none" stroke-width="1.500"/><use href="#fun" x="7" y="7" width="11" height="11"/></svg></button><span class="vsep"></span>
<button class="dim" aria-label="过滤一"><svg width="18" height="18" fill="none" stroke="#222"><circle cx="4" cy="4" r="3"/><path d="M10 6L13 1L16 6ZM1 10H7V16H1Z"/><use href="#fun" x="7" y="7" width="11" height="11"/></svg></button>
<button class="dim" aria-label="过滤二"><svg width="18" height="18" fill="none" stroke="#222"><path d="M1 9L9 2L14 5L6 12Z"/><use href="#fun" x="7" y="7" width="11" height="11"/></svg></button>
<button class="dim" aria-label="过滤三"><svg width="18" height="18" fill="none" stroke="#222"><path d="M2 14V3L11 6L7 8"/><use href="#fun" x="7" y="7" width="11" height="11"/></svg></button>
<button class="dim" aria-label="过滤四"><svg width="18" height="18" fill="none" stroke="#222"><path d="M8 2Q-2 8 6 15" stroke-width="1.500"/><use href="#fun" x="7" y="7" width="11" height="11"/></svg></button>
<button class="dim" aria-label="过滤五"><svg width="18" height="18" fill="none" stroke="#222"><path d="M1 9L6 3H16L12 9Z"/><use href="#fun" x="7" y="7" width="11" height="11"/></svg></button>
<button class="dim" aria-label="过滤六"><svg width="18" height="18" fill="none" stroke="#222"><path d="M1 2H14V6H5V10H1Z"/><use href="#fun" x="7" y="7" width="11" height="11"/></svg></button>
<button class="dim" aria-label="过滤七"><svg width="18" height="18" fill="none" stroke="#222"><path d="M2 1V7M15 1V7M2 4H15M2 16L5 9L8 16"/><use href="#fun" x="7" y="7" width="11" height="11"/></svg></button><span class="vsep"></span>
<button class="wide" style="background:#fdd08f" aria-label="点过滤"><svg width="22" height="18"><path d="M2 1L10 9M10 1L2 9" stroke="#111" stroke-dasharray="2 5"/><circle cx="6" cy="5" r="2.500" fill="#5ab53a" stroke="#205c18"/><use href="#fun" x="5" y="7" width="11" height="11"/><path d="M18 5V13L21 9Z"/></svg></button>
<button class="on" aria-label="端点"><svg width="18" height="18"><path d="M4 15L12 6" stroke="#222" stroke-width="1.500"/><circle cx="13" cy="5" r="2.500" fill="#5ab53a" stroke="#205c18"/></svg></button>
<button class="on" aria-label="中点"><svg width="18" height="18"><path d="M2 16L16 2" stroke="#222" stroke-width="1.500"/><circle cx="9" cy="9" r="2.500" fill="#5ab53a" stroke="#205c18"/></svg></button>
<button class="on" aria-label="圆心"><svg width="18" height="18"><circle cx="9" cy="9" r="6.500" fill="#fff" stroke="#222" stroke-width="1.300"/><circle cx="9" cy="9" r="2.500" fill="#5ab53a" stroke="#205c18"/></svg></button>
<button class="dim" aria-label="曲线点"><svg width="18" height="18" fill="none" stroke="#222"><path d="M2 13Q9 15 9 8Q14 2 16 7Q15 12 10 9"/><circle cx="8" cy="7" r="3"/></svg></button>
<button class="dim" aria-label="面点"><svg width="18" height="18" fill="none" stroke="#222"><path d="M1 14L6 5H17L12 14Z"/><circle cx="9" cy="10" r="2"/></svg></button>
<button aria-label="交点"><svg width="18" height="18"><path d="M4 2L7 16M4 14L16 3M5 6L16 13" stroke="#222" stroke-width="1.500"/><circle cx="7" cy="9" r="2" fill="#5ab53a"/></svg></button>
<button class="dim" aria-label="穿透点"><svg width="18" height="18" fill="none" stroke="#222"><path d="M1 14L6 5H17L12 14ZM2 2L16 17"/><circle cx="9" cy="10" r="2"/></svg></button>
<button class="on" aria-label="原点"><svg width="18" height="18"><path d="M8 11V2M6 4L8 1L10 4M8 11H16M14 9L17 11L14 13M8 11L2 16M2 13V16H5" fill="none" stroke="#222" stroke-width="1.300"/><circle cx="8" cy="11" r="2" fill="#5ab53a"/></svg></button>
<button class="on" aria-label="拾取点"><svg width="18" height="18"><circle cx="7" cy="5" r="2.500" fill="#5ab53a" stroke="#205c18"/><use href="#cur" x="9" y="6" width="7" height="10"/></svg></button>
<button class="dim" aria-label="网格点"><svg width="18" height="18" fill="none" stroke="#222" stroke-width="1.300"><path d="M1 2H16V16H1ZM4 5H13V13H4Z"/><circle cx="9" cy="9" r="2"/></svg></button>
<button class="dim" aria-label="坐标点"><svg width="20" height="18"><text x="1" y="8" font-size="8">XYZ</text><circle cx="9" cy="13" r="2" fill="none" stroke="#222"/></svg></button>
<button aria-label="两点之间"><svg width="18" height="18"><path d="M5 14L15 3M9 10L14 15M14 10L10 16" stroke="#222"/><circle cx="4" cy="12" r="2.500" fill="#5ab53a" stroke="#205c18"/><circle cx="12" cy="3" r="2" fill="#fff" stroke="#222"/></svg></button>
<button aria-label="多点"><svg width="18" height="18"><path d="M4 4H13M4 4L10 14" stroke="#222"/><circle cx="4" cy="4" r="2.500" fill="#5ab53a" stroke="#205c18"/><circle cx="14" cy="4" r="2.500" fill="#5ab53a" stroke="#205c18"/><circle cx="9" cy="13" r="2.500" fill="#5ab53a" stroke="#205c18"/><use href="#cur" x="12" y="7" width="6" height="9"/></svg></button>
</div>
</div>

<div class="palette">
<div class="pal-head"></div>
<div class="pal-tabs d-flex"><i style="background:#efd2b0"></i><i class="ms-1"></i><i></i></div>
<div class="pal-body">
<div><span class="grip align-self-end" style="width:16px;height:8px;margin:2px 0 0"></span><button aria-label="选择"><svg width="18" height="24"><use href="#cur"/></svg></button></div>
<div>
<button aria-label="矩形"><svg width="24" height="24"><path d="M2 4H22V20H2Z" fill="none" stroke="#111" stroke-width="2"/></svg></button>
<button aria-label="直线"><svg width="24" height="24"><path d="M2 2L22 22" stroke="#222" stroke-width="2"/></svg></button>
<button class="on" aria-label="圆"><svg width="26" height="26"><circle cx="13" cy="13" r="11" fill="none" stroke="#222" stroke-width="2"/></svg></button>
<button aria-label="多边形"><svg width="28" height="28"><path d="M14 2L26 11L21 26H7L2 11Z" fill="none" stroke="#111" stroke-width="2"/></svg></button></div>
<div><button aria-label="标注"><svg width="24" height="24"><use href="#dimn"/></svg></button></div>
<div>
<button class="sm" aria-label="点"><svg width="12" height="12"><path d="M1 1L11 11M11 1L1 11" stroke="#349840" stroke-width="1.300"/><circle cx="6" cy="6" r="2" fill="#7be27c" stroke="#156c20"/></svg></button>
<button class="sm" aria-label="中心"><svg width="16" height="16"><path d="M2 2H14V14H2Z" fill="none" stroke="#888"/><path d="M8 0V16M0 8H16" stroke="#222" stroke-dasharray="2 1"/><path d="M7 7H9V9H7Z" fill="#29a135"/></svg></button>
<button class="sm" aria-label="圆弧"><svg width="16" height="16"><path d="M3 15Q2 3 14 2" fill="none" stroke="#111" stroke-width="2"/></svg></button>
<button class="sm" aria-label="椭圆"><svg width="16" height="16"><ellipse cx="8" cy="8" rx="7" ry="5" transform="rotate(-35 8 8)" fill="none" stroke="#111" stroke-width="2"/></svg></button>
<button class="sm" aria-label="样条"><svg width="16" height="16"><path d="M2 15Q9 15 8 8Q7 2 15 1" fill="none" stroke="#111" stroke-width="2"/></svg></button>
<button class="sm" aria-label="中心线"><svg width="16" height="16"><path d="M8 0V16" stroke="#111" stroke-width="2" stroke-dasharray="5 2 2 2"/></svg></button></div>
<div>
<button aria-label="拐角"><svg width="24" height="24"><path d="M4 21V4H21" fill="none" stroke="#2aa338" stroke-width="3"/><path d="M5 9H10V4" fill="none" stroke="#888"/></svg></button>
<button class="sm" aria-label="偏移"><svg width="18" height="18"><path d="M2 14Q2 3 14 2" fill="none" stroke="#7db354" stroke-width="2.500"/><path d="M11 16Q11 11 17 10" fill="none" stroke="#888" stroke-width="2"/><path d="M12 12L8 8M8 11V8H11" fill="none" stroke="#111"/></svg></button>
<button class="sm" aria-label="镜像"><svg width="16" height="16" fill="none" stroke="#aab1b6"><path d="M8 0V16" stroke-dasharray="3 1"/><path d="M6 3V14H1ZM10 3V14H15ZM4 8V14M12 8V14"/></svg></button>
<button class="sm" aria-label="旋转"><svg width="16" height="16"><path d="M1 9L7 2L13 7L7 14Z" fill="none" stroke="#2d8d48" stroke-width="1.500"/><path d="M6 9H15V15H6Z" fill="none" stroke="#333" stroke-dasharray="2 1"/><path d="M12 1Q15 1 15 5" fill="none" stroke="#111" stroke-width="1.500"/></svg></button></div>
<div>
<button aria-label="参考轴"><svg width="24" height="26"><path d="M1 15H23" stroke="#111" stroke-width="1.500"/><path d="M7 1V15" stroke="#2a8531" stroke-width="2"/><path d="M14 14L23 5" stroke="#2457b5" stroke-width="2"/><path d="M4 24L12 16" stroke="#902020" stroke-width="2"/></svg></button><button class="car" aria-label="更多"></button></div>
<div>
<button aria-label="添加平面"><svg width="24" height="24"><path d="M2 8L8 1V16L2 21Z" fill="none" stroke="#888" stroke-width="1.300"/><path d="M8 1H20M2 21H13" stroke="#888" stroke-dasharray="1 1"/><path d="M13 8L19 1V16L13 21Z" fill="#9fe78b" stroke="#2c9336"/><use href="#plus" x="12" y="14" width="10" height="10"/></svg></button>
<button aria-label="添加边界"><svg width="24" height="24"><path d="M2 8L8 1V16L2 21Z" fill="none" stroke="#888" stroke-width="1.300"/><path d="M8 1H20M2 21H13" stroke="#888" stroke-dasharray="1 1"/><path d="M13 8L19 1V16M13 8V21" fill="none" stroke="#962f43" stroke-width="1.500" stroke-dasharray="3 1"/><use href="#plus" x="12" y="14" width="10" height="10"/></svg></button></div>
<div>
<button aria-label="添加轮廓"><svg width="24" height="24"><path d="M2 3V20H13" fill="none" stroke="#3465bd" stroke-width="3"/><path d="M3 3H20V16" fill="none" stroke="#333" stroke-dasharray="4 2"/><use href="#plus" x="14" y="15" width="9" height="9"/></svg></button>
<button aria-label="封闭轮廓"><svg width="24" height="24"><path d="M14 2Q4 6 2 14Q3 22 12 22H21Q24 14 19 6Z" fill="none" stroke="#c5cbd0" stroke-width="2" stroke-dasharray="4 3"/></svg></button></div>
<div>
<button aria-label="工具"><svg width="24" height="24"><path d="M4 5L22 22" stroke="#888" stroke-width="3"/><path d="M1 5A4 4 0 1 0 5 1" fill="none" stroke="#777" stroke-width="2"/><path d="M22 2L12 12" stroke="#666" stroke-width="2"/><path d="M13 11L3 22" stroke="#eda62c" stroke-width="5"/></svg></button><button class="car car-low" aria-label="更多"></button>
<button aria-label="删除曲线"><svg width="24" height="24"><path d="M1 12Q8 13 11 7Q14 2 22 3" fill="none" stroke="#222" stroke-width="2"/><use href="#rx" x="11" y="9" width="13" height="13"/></svg></button></div>
</div>
<div class="pal-foot"></div>
</div>
</div>
</main>

<div class="d-flex"><button class="nc">NC计算监视器</button></div>
<footer class="status d-flex align-items-center"><span class="flex-fill">选择圆的圆周点或打开右键菜单选择其它选项.</span><span class="cell cell-l">草图未完全约束.</span><span class="cell">X = 83.23</span><span class="cell">Y = 7.77</span><span class="cell">Dia = 11.74</span></footer>

<div class="taskbar d-flex align-items-center">
<button class="task" aria-label="开始"><svg width="38" height="38"><circle cx="19" cy="19" r="17" fill="url(#orb)" stroke="#33536f"/><path d="M11 12Q15 10 18 12L17 18Q14 16 10 18Z" fill="#ee6a33"/><path d="M19 12Q23 14 27 12L26 18Q22 20 18 18Z" fill="#88c540"/><path d="M10 19Q13 17 17 19L16 25Q12 23 9 25Z" fill="#4aa5e8"/><path d="M18 19Q22 21 26 19L25 25Q21 27 17 25Z" fill="#fbc93b"/></svg></button>
<button class="task task-l" aria-label="浏览器"><svg width="34" height="34"><circle cx="17" cy="16" r="12" fill="none" stroke="url(#blu)" stroke-width="7"/><path d="M16 32A5 5 0 0 1 17 23A7 7 0 0 1 29 23A5 5 0 0 1 30 32Z" fill="#fff"/></svg></button>
<button class="task open ms-1" aria-label="资源管理器"><svg width="34" height="32"><path d="M1 5H12L14 3H30L32 8V27H1Z" fill="#e6cc72"/><path d="M4 3H11V8H4Z" fill="#3d9b52"/><path d="M14 2H20V8H14Z" fill="#d07b50"/><path d="M1 9H33V27H1Z" fill="#f6e498" stroke="#c8a84b"/><path d="M7 29V19H27V29H22V23H12V29Z" fill="#a5dcf0" stroke="#5ba5c4"/></svg></button>
<button class="task task-l ms-1 me-1" aria-label="NC"><svg width="34" height="34"><circle cx="17" cy="19" r="12" fill="url(#globe)"/><path d="M10 26Q8 20 13 19Q18 22 16 28Q13 30 10 26ZM22 12Q28 14 27 20Q23 19 22 12Z" fill="#3fae5b"/><path d="M6 26Q1 32 12 29Q27 25 32 15Q34 9 28 11" fill="none" stroke="#e8c14a" stroke-width="2.500"/><path d="M3 3L20 4L15 17Z" fill="#d52745"/><path d="M3 3L14 9L15 17Z" fill="#9d1530"/></svg></button>
<button class="task task-m open" aria-label="Cimatron"><svg width="36" height="36"><path d="M3 3H33V33H3Z" fill="#e58530"/><path d="M3 3H19L33 20V33H3Z" fill="#ef9b4b" opacity=".5"/><text x="9" y="19" font-size="19" font-weight="500" fill="#fff">Ci</text><text x="18" y="33" font-size="12" font-weight="700">14</text></svg></button>
<button class="task task-m open ms-1" aria-label="录制"><svg width="34" height="34"><circle cx="17" cy="17" r="15" fill="#111" stroke="#f0f0f0" stroke-width="2"/><circle cx="17" cy="17" r="8.500" fill="#e8262b"/></svg></button>
<div class="tray d-flex align-items-center ms-auto">
<button class="me-2" aria-label="QQ"><svg width="16" height="16"><path d="M0 0H16V16H0Z" fill="#2b86e0"/><circle cx="8" cy="7" r="4.500" fill="none" stroke="#fff" stroke-width="2"/><path d="M9 9L13 13" stroke="#fff" stroke-width="2"/></svg></button>
<button aria-label="云"><svg width="16" height="14"><ellipse cx="8" cy="7" rx="8" ry="6" fill="#222"/><path d="M8 8Q4 12 3 7Q4 3 8 7Q12 11 13 7Q12 3 8 6" fill="none" stroke="#fff" stroke-width="1.500"/></svg></button>
<button aria-label="鼠标"><svg width="12" height="18"><rect x="1" y="1" width="10" height="16" rx="4" fill="#4bb8b3" stroke="#1d5c60"/><path d="M6 3V8" stroke="#174c50"/></svg></button>
<button aria-label="音频"><svg width="16" height="16"><path d="M1 6H4L9 2V14L4 10H1Z" fill="#31a18c"/><path d="M11 5V11M14 3V13" stroke="#31a18c" stroke-width="1.500"/></svg></button>
<button aria-label="录屏"><svg width="16" height="16"><circle cx="8" cy="8" r="7" fill="#111" stroke="#eee"/><circle cx="8" cy="8" r="4" fill="#e12a2a"/></svg></button>
<button aria-label="安全"><svg width="16" height="16"><circle cx="8" cy="8" r="7" fill="#8ec722" stroke="#eed51c" stroke-width="2"/><path d="M8 4V12M4 8H12" stroke="#184e20" stroke-width="2"/></svg></button>
<button aria-label="显卡"><svg width="16" height="16"><path d="M0 0H16V16H0Z" fill="#21321d"/><path d="M2 8Q8 2 14 8Q8 14 2 8M5 8Q8 5 11 8Q8 11 5 8" fill="none" stroke="#78b92c" stroke-width="1.500"/></svg></button>
<button aria-label="USB"><svg width="16" height="16"><path d="M1 3H9V9L6 12H4L1 9ZM3 0V3M7 0V3" fill="#c6ced4" stroke="#555"/><circle cx="11" cy="11" r="5" fill="#28a93b"/><path d="M8 11L10 13L14 8" fill="none" stroke="#fff" stroke-width="1.500"/></svg></button>
<button aria-label="操作中心"><svg width="16" height="16"><path d="M2 0V16" stroke="#fff" stroke-width="1.500"/><path d="M3 1H12V8H3Z" fill="#eef2f5"/><circle cx="11" cy="11" r="5" fill="#d7373b"/><path d="M9 9L13 13M13 9L9 13" stroke="#fff" stroke-width="1.500"/></svg></button>
<button aria-label="网络"><svg width="16" height="16"><path d="M2 14V12M5 14V10M8 14V7M11 14V4M14 14V2" stroke="#f5f8fb" stroke-width="2"/></svg></button>
<button aria-label="音量"><svg width="16" height="16"><path d="M1 6H4L8 2V14L4 10H1Z" fill="#fff"/><path d="M11 5Q13 8 11 11" fill="none" stroke="#fff" stroke-width="1.500"/></svg></button>
</div>
<div class="clock">下午 1:48<br>2019/12/17 星期二</div>
<button class="peek" aria-label="显示桌面"></button>
</div>
<script src="https://cdn.jsdelivr.net/npm/bootstrap@5.3.0/dist/js/bootstrap.bundle.min.js"></script>
</body>
</html>
